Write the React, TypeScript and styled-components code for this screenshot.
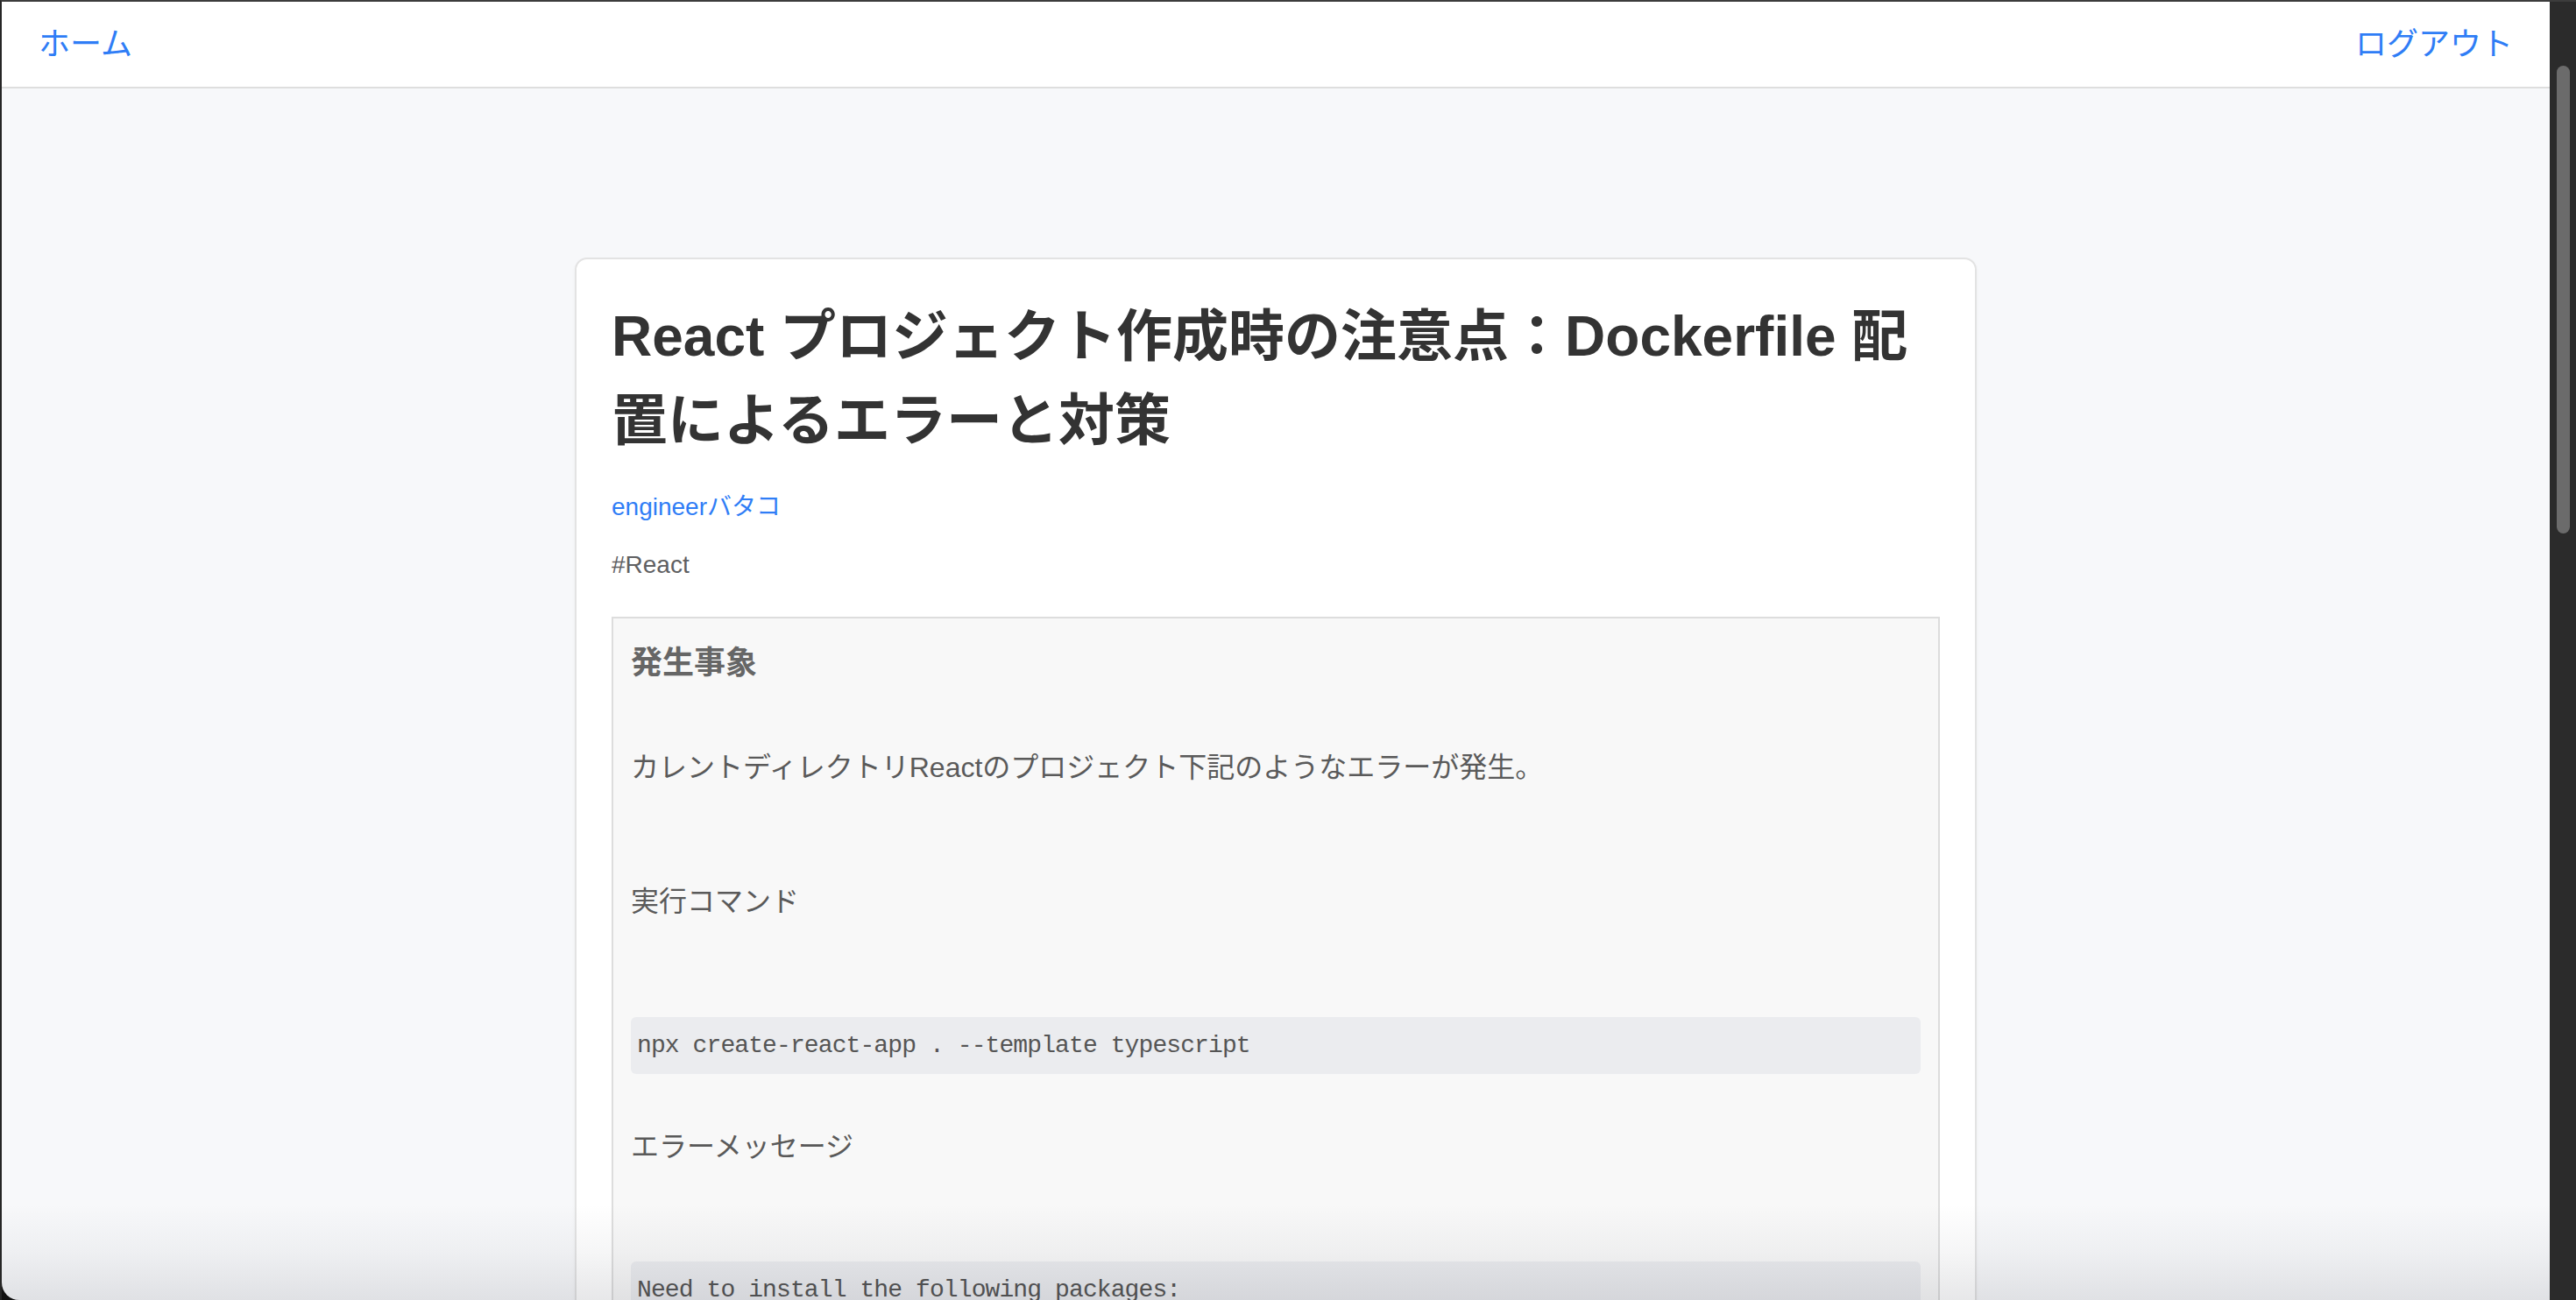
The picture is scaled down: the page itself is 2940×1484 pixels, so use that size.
import React from 'react'
import styled, { createGlobalStyle } from 'styled-components'

const GlobalStyle = createGlobalStyle`
  html, body {
    margin: 0;
    padding: 0;
    overflow: hidden;
    background: #111;
  }
  * {
    box-sizing: border-box;
  }
`

const Frame = styled.div`
  position: relative;
  height: 100vh;
  display: flex;
  border-top: 2px solid #3c3c3c;
  border-left: 2px solid #262626;
  background: #111;
  overflow: hidden;
  font-family: "Liberation Sans", "Noto Sans CJK JP", sans-serif;
`

const Window = styled.div`
  flex: 1;
  min-width: 0;
  display: flex;
  flex-direction: column;
  background: #f7f8fa;
  border-bottom-left-radius: 20px;
  overflow: hidden;
`

const Header = styled.header`
  height: 99px;
  flex-shrink: 0;
  display: flex;
  align-items: center;
  justify-content: space-between;
  padding: 0 42px;
  background: #fff;
  border-bottom: 2px solid #dedede;
`

const NavLink = styled.a`
  color: #2f7df6;
  font-size: 36px;
  text-decoration: none;
  line-height: 1;
`

const Main = styled.main`
  flex: 1;
  display: flex;
  justify-content: center;
  align-items: flex-start;
  padding-top: 193px;
`

const Card = styled.article`
  width: 1600px;
  flex-shrink: 0;
  padding: 40px;
  background: #fff;
  border: 2px solid #e3e3e3;
  border-radius: 14px;
  box-shadow: 0 2px 4px rgba(0, 0, 0, 0.04);
`

const Title = styled.h1`
  margin: 0 0 30px;
  font-size: 64px;
  line-height: 96px;
  font-weight: bold;
  color: #333;
`

const Author = styled.a`
  display: block;
  margin-bottom: 24px;
  font-size: 28px;
  line-height: 42px;
  color: #2f7df6;
  text-decoration: none;
`

const Tag = styled.div`
  margin-bottom: 38px;
  font-size: 28px;
  line-height: 42px;
  color: #5f6062;
`

const Body = styled.section`
  padding: 22px 20px;
  background: #f8f8f8;
  border: 2px solid #dddddd;
  color: #5a5a5a;
`

const Heading = styled.h3`
  margin: 0;
  font-size: 36px;
  line-height: 58px;
  font-weight: bold;
  color: #666;
`

const Para = styled.p<{ $gap: number }>`
  margin: ${p => p.$gap}px 0 0;
  font-size: 32px;
  line-height: 48px;
`

const Code = styled.pre<{ $gap: number }>`
  margin: ${p => p.$gap}px 0 0;
  padding: 16px 7px;
  background: #ebecef;
  border-radius: 6px;
  font-family: "Liberation Mono", "DejaVu Sans Mono", monospace;
  font-size: 28px;
  letter-spacing: -0.9px;
  line-height: 33px;
  color: #555;
  white-space: pre;
`

const Scrollbar = styled.div`
  width: 30px;
  flex-shrink: 0;
  padding: 73px 7px 0 8px;
  background: #2b2b2b;
`

const Thumb = styled.div`
  height: 534px;
  border-radius: 8px;
  background: #6b6b6b;
`

const BottomShade = styled.div`
  position: absolute;
  left: 0;
  right: 30px;
  bottom: 0;
  height: 110px;
  pointer-events: none;
  background: linear-gradient(to bottom, rgba(0, 0, 0, 0) 0%, rgba(20, 24, 40, 0.04) 50%, rgba(20, 24, 40, 0.1) 100%);
  border-bottom-left-radius: 20px;
`

export default function App() {
  return (
    <>
      <GlobalStyle />
      <Frame>
        <Window>
          <Header>
            <NavLink href="#">ホーム</NavLink>
            <NavLink href="#">ログアウト</NavLink>
          </Header>
          <Main>
            <Card>
              <Title>React プロジェクト作成時の注意点：Dockerfile 配置によるエラーと対策</Title>
              <Author href="#">engineerバタコ</Author>
              <Tag>#React</Tag>
              <Body>
                <Heading>発生事象</Heading>
                <Para $gap={66}>カレントディレクトリReactのプロジェクト下記のようなエラーが発生。</Para>
                <Para $gap={105}>実行コマンド</Para>
                <Code $gap={108}>npx create-react-app . --template typescript</Code>
                <Para $gap={59}>エラーメッセージ</Para>
                <Code $gap={107}>{`Need to install the following packages:
  create-react-app@5.0.1
Ok to proceed? (y) y`}</Code>
              </Body>
            </Card>
          </Main>
        </Window>
        <Scrollbar>
          <Thumb />
        </Scrollbar>
        <BottomShade />
      </Frame>
    </>
  )
}
